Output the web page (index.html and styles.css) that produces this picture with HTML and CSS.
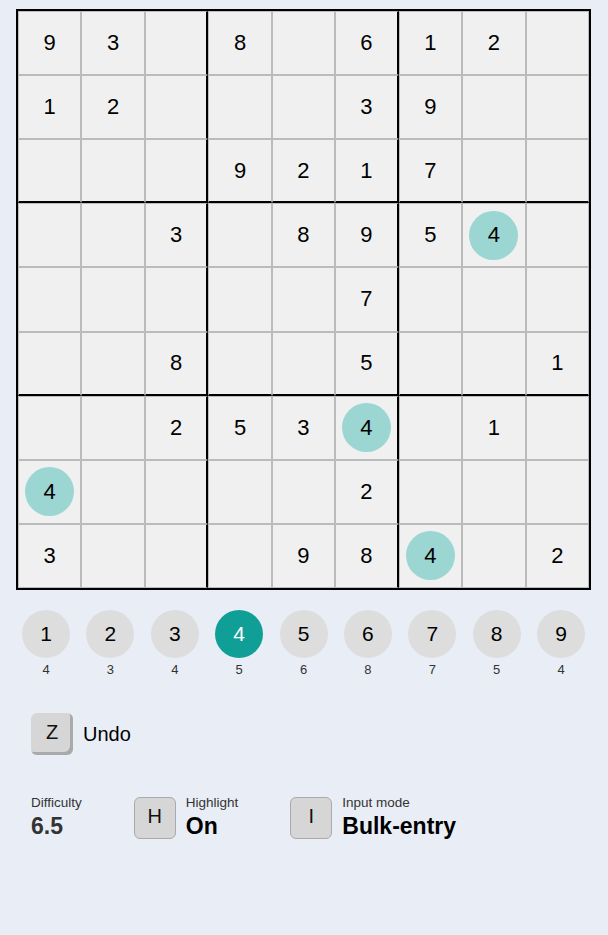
FILE: index.html
```html
<!DOCTYPE html>
<html lang="en">
<head>
  <meta charset="UTF-8" />
  <meta name="viewport" content="width=device-width, initial-scale=1.0" />
  <title>Sudoku</title>
  <link rel="stylesheet" href="styles.css">
</head>
<body>
  <div class="board">
    <div class="cell">9</div><div class="cell">3</div><div class="cell"></div><div class="cell">8</div><div class="cell"></div><div class="cell">6</div><div class="cell">1</div><div class="cell">2</div><div class="cell"></div>
    <div class="cell">1</div><div class="cell">2</div><div class="cell"></div><div class="cell"></div><div class="cell"></div><div class="cell">3</div><div class="cell">9</div><div class="cell"></div><div class="cell"></div>
    <div class="cell"></div><div class="cell"></div><div class="cell"></div><div class="cell">9</div><div class="cell">2</div><div class="cell">1</div><div class="cell">7</div><div class="cell"></div><div class="cell"></div>
    <div class="cell"></div><div class="cell"></div><div class="cell">3</div><div class="cell"></div><div class="cell">8</div><div class="cell">9</div><div class="cell">5</div><div class="cell"><span class="hl">4</span></div><div class="cell"></div>
    <div class="cell"></div><div class="cell"></div><div class="cell"></div><div class="cell"></div><div class="cell"></div><div class="cell">7</div><div class="cell"></div><div class="cell"></div><div class="cell"></div>
    <div class="cell"></div><div class="cell"></div><div class="cell">8</div><div class="cell"></div><div class="cell"></div><div class="cell">5</div><div class="cell"></div><div class="cell"></div><div class="cell">1</div>
    <div class="cell"></div><div class="cell"></div><div class="cell">2</div><div class="cell">5</div><div class="cell">3</div><div class="cell"><span class="hl">4</span></div><div class="cell"></div><div class="cell">1</div><div class="cell"></div>
    <div class="cell"><span class="hl">4</span></div><div class="cell"></div><div class="cell"></div><div class="cell"></div><div class="cell"></div><div class="cell">2</div><div class="cell"></div><div class="cell"></div><div class="cell"></div>
    <div class="cell">3</div><div class="cell"></div><div class="cell"></div><div class="cell"></div><div class="cell">9</div><div class="cell">8</div><div class="cell"><span class="hl">4</span></div><div class="cell"></div><div class="cell">2</div>
  </div>

  <div class="pad">
    <div class="pad-item"><div class="pad-btn">1</div><div class="pad-count">4</div></div>
    <div class="pad-item"><div class="pad-btn">2</div><div class="pad-count">3</div></div>
    <div class="pad-item"><div class="pad-btn">3</div><div class="pad-count">4</div></div>
    <div class="pad-item"><div class="pad-btn active">4</div><div class="pad-count">5</div></div>
    <div class="pad-item"><div class="pad-btn">5</div><div class="pad-count">6</div></div>
    <div class="pad-item"><div class="pad-btn">6</div><div class="pad-count">8</div></div>
    <div class="pad-item"><div class="pad-btn">7</div><div class="pad-count">7</div></div>
    <div class="pad-item"><div class="pad-btn">8</div><div class="pad-count">5</div></div>
    <div class="pad-item"><div class="pad-btn">9</div><div class="pad-count">4</div></div>
  </div>

  <div class="undo">
    <div class="key raised">Z</div>
    <span class="undo-label">Undo</span>
  </div>

  <div class="status">
    <div class="stat">
      <div class="stat-text">
        <div class="stat-label">Difficulty</div>
        <div class="stat-value dim">6.5</div>
      </div>
    </div>
    <div class="stat">
      <div class="key">H</div>
      <div class="stat-text">
        <div class="stat-label">Highlight</div>
        <div class="stat-value">On</div>
      </div>
    </div>
    <div class="stat">
      <div class="key">I</div>
      <div class="stat-text">
        <div class="stat-label">Input mode</div>
        <div class="stat-value">Bulk-entry</div>
      </div>
    </div>
  </div>
</body>
</html>
```

FILE: styles.css
```css
* {
  box-sizing: border-box;
}
body {
  margin: 0;
  background-color: #e9eef6;
  font-family: 'Liberation Sans', Arial, sans-serif;
  color: #000;
}
.board {
  display: grid;
  grid-template-columns: repeat(9, 1fr);
  grid-template-rows: repeat(9, 1fr);
  width: 575px;
  height: 581px;
  margin: 9px 0 0 16px;
  border: 2px solid #000;
  background-color: #f0f0f0;
}
.cell {
  display: flex;
  align-items: center;
  justify-content: center;
  border: 1px solid #bbb;
  font-size: 22px;
}
.cell:nth-child(9n+3),
.cell:nth-child(9n+6) {
  border-right: 2px solid #000;
}
.cell:nth-child(n+19):nth-child(-n+27),
.cell:nth-child(n+46):nth-child(-n+54) {
  border-bottom: 2px solid #000;
}
.hl {
  display: flex;
  align-items: center;
  justify-content: center;
  width: 49px;
  height: 49px;
  border-radius: 50%;
  background-color: #9cd6d2;
}
.pad {
  display: flex;
  justify-content: space-between;
  width: 575px;
  margin: 20px 0 0 16px;
  padding: 0 6px;
}
.pad-item {
  display: flex;
  flex-direction: column;
  align-items: center;
}
.pad-btn {
  display: flex;
  align-items: center;
  justify-content: center;
  width: 48px;
  height: 48px;
  border-radius: 50%;
  background-color: #dddddd;
  font-size: 21px;
}
.pad-btn.active {
  background-color: #109f97;
  color: #fff;
}
.pad-count {
  margin-top: 4px;
  font-size: 13px;
  color: #333;
}
.undo {
  display: flex;
  align-items: center;
  margin: 36px 0 0 31px;
}
.key {
  display: flex;
  flex: none;
  align-items: center;
  justify-content: center;
  width: 42px;
  height: 42px;
  padding-bottom: 4px;
  border: 1px solid #aaa;
  border-radius: 6px;
  background-color: #d6d6d6;
  font-size: 20px;
  color: #111;
}
.key.raised {
  border: none;
  box-shadow: inset -3px -3px 0 #aaa;
}
.undo-label {
  margin-left: 10px;
  font-size: 20px;
}
.status {
  display: flex;
  align-items: flex-start;
  gap: 52px;
  margin: 42px 0 0 31px;
}
.stat {
  display: flex;
  align-items: flex-start;
  gap: 10px;
}
.stat-text {
  margin-top: -2px;
}
.stat-label {
  font-size: 13.5px;
  color: #333;
}
.stat-value {
  margin-top: 3px;
  font-size: 23px;
  font-weight: bold;
}
.stat-value.dim {
  color: #333;
}
```
